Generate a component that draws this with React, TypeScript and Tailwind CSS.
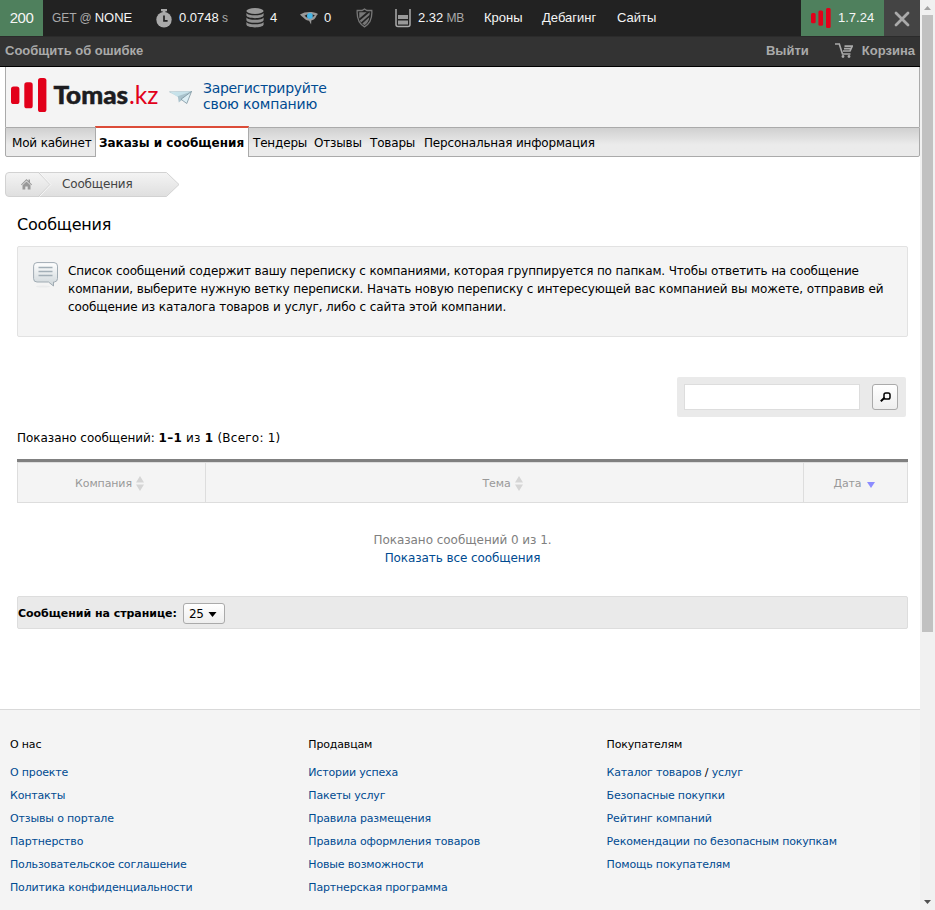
import type { ReactNode } from 'react';

const link = 'text-[#004b91]';

function LogoBars({ className }: { className: string }) {
  return (
    <svg className={className} viewBox="0 0 36 34" preserveAspectRatio="none" fill="#e2001a">
      <rect x="0" y="8.5" width="8.4" height="17.5" rx="2.6" />
      <rect x="13.3" y="4.3" width="8.4" height="26" rx="2.6" />
      <rect x="27" y="0" width="8.4" height="34" rx="2.6" />
    </svg>
  );
}

function Stopwatch() {
  return (
    <svg className="h-[19px] w-4" viewBox="0 0 16 19">
      <path d="M5 0h6v2.2H9.4V4H6.6V2.2H5z" fill="#aaa" />
      <circle cx="8" cy="10.800" r="7.700" fill="#aaa" />
      <path d="M8 6.500v5.300h3.600" fill="none" stroke="#222" strokeWidth="1.700" />
    </svg>
  );
}

function Database() {
  return (
    <svg className="h-5 w-[18px]" viewBox="0 0 18 20">
      <ellipse cx="9" cy="3" rx="8.6" ry="2.9" fill="#999" />
      <path
        d="M.4 4.9C2 8 16 8 17.600 4.900v2.600c-1 3.500-16.200 3.500-17.200 0zM.4 9.400c1.600 3.100 15.600 3.100 17.200 0v2.800c-1 3.500-16.200 3.500-17.200 0zM.4 14c1.600 3.100 15.600 3.100 17.200 0v2.800c-1 3.500-16.200 3.500-17.200 0z"
        fill="#909090"
      />
    </svg>
  );
}

function Eye() {
  return (
    <svg className="h-[13px] w-[18px]" viewBox="0 0 18 13">
      <path d="M0 2.600C5-.6 13-.6 18 2l-1.200 1.300C15.500 7 13 8.300 11.300 8.600l-.2 3.900-2-3.800C6 8.600 4 6.500 0 2.600z" fill="#999" />
      <path d="M4.500 3.700Q9 1 14.800 3.300 13 6 9.500 6.300 6.500 6 4.500 3.700z" fill="#222" />
      <circle cx="9.900" cy="3.900" r="2.900" fill="#47b5e6" />
    </svg>
  );
}

function Shield() {
  return (
    <svg className="h-5 w-[17px]" viewBox="0 0 17 20">
      <path
        d="M8.500 1 11 2.500h4.800c.5 7.500-1 13-7.300 16.300C2.200 15.500.7 10 1.200 2.500H6z"
        fill="none"
        stroke="#777"
        strokeWidth="1.300"
      />
      <path d="M3.200 4.300h7.500L3.300 10.500zM13.700 4.300 3.800 12.500l1.200 2 8.500-7.500zM13.300 9.300 6.300 15.500l2.200 1.700c2.800-1.700 4.200-4 4.800-7.900z" fill="#777" />
    </svg>
  );
}

function Memory() {
  return (
    <svg className="h-[19px] w-4" viewBox="0 0 16 19">
      <path d="M1 0v15.500q0 2 2 2h10q2 0 2-2V0" fill="none" stroke="#aaa" strokeWidth="1.500" />
      <path d="M3 6h10v4H3zM3 11.500h10v4H3z" fill="#999" />
    </svg>
  );
}

function Cart() {
  return (
    <svg className="h-[15px] w-[18px]" viewBox="0 0 18 15" fill="none" stroke="#aaa" strokeWidth="1.700">
      <path d="M0 1h4.300l3.200 10H15.500M9.500 3.200h7.700L15 8H8M9 5.600h7" />
      <circle cx="8" cy="13.500" r="1.400" fill="#aaa" stroke="none" />
      <circle cx="14" cy="13.500" r="1.400" fill="#aaa" stroke="none" />
    </svg>
  );
}

function PaperPlane() {
  return (
    <svg className="h-[13px] w-[23px]" viewBox="0 0 23 13">
      <path d="M.5.800 22.500.5 9 5z" fill="#f0fafc" stroke="#a3bcc6" strokeWidth=".7" />
      <path d="M1.500 1.300 22.500.5 9 6.200z" fill="#c7e2ea" />
      <path d="M8.800 5.300 22.500.5 12.800 9 9.800 11.500z" fill="#a9c2cc" />
      <path d="M12 8.300 22.500.5 17.800 12.500z" fill="#dceef4" stroke="#6e8793" strokeWidth=".7" />
    </svg>
  );
}

function MessageBubble() {
  return (
    <svg className="h-[27px] w-[26px]" viewBox="0 0 26 27">
      <defs>
        <linearGradient id="bubble" x2="0" y2="1">
          <stop stopColor="#fff" />
          <stop offset="1" stopColor="#cdd5d9" />
        </linearGradient>
      </defs>
      <ellipse cx="10" cy="24.500" rx="7" ry="1" fill="#eaebec" />
      <path
        d="M4 .6h17q3.500 0 3.500 3.500v12.400q0 3-3 3.500h-1v4l-5-4H4q-3.400 0-3.400-3.300V4.100Q.6.600 4 .6z"
        fill="url(#bubble)"
        stroke="#a0abb3"
      />
      <path d="M5.500 5.500h14M5.500 9.500h14M5.500 13.500h14" stroke="#a3afb7" strokeWidth="1.500" />
    </svg>
  );
}

function SortArrows() {
  return (
    <svg className="h-[15px] w-2" viewBox="0 0 8 15" fill="#d5d5d5">
      <path d="M0 6.500 4 0l4 6.500zM0 8.500h8L4 15z" />
    </svg>
  );
}

function Tool({ w, children }: { w: string; children: ReactNode }) {
  return <div className={`flex h-full shrink-0 items-center whitespace-pre ${w}`}>{children}</div>;
}

function Toolbar() {
  return (
    <div className="flex h-9 items-center bg-[#222] font-['Liberation_Sans',sans-serif] text-[13px] text-[#f5f5f5]">
      <div className="flex h-full w-[43px] items-center justify-center bg-[#4f805d] text-[15px] tracking-[-0.5px]">200</div>
      <Tool w="w-[113px] pl-[9px]">
        <span className="text-[12px] tracking-[-0.1px] text-[#aaa]">GET @ </span>NONE
      </Tool>
      <Tool w="w-[90px] gap-[7px]">
        <Stopwatch />
        <span>0.0748<span className="text-[12px] text-[#aaa]"> s</span></span>
      </Tool>
      <Tool w="w-[54px] gap-1.5"><Database /><span>4</span></Tool>
      <Tool w="w-14 gap-1.5"><Eye /><span>0</span></Tool>
      <Tool w="w-[39px]"><Shield /></Tool>
      <Tool w="w-[89px] gap-[7px]">
        <Memory />
        <span>2.32<span className="text-[12px] tracking-[-0.2px] text-[#aaa]"> MB</span></span>
      </Tool>
      <Tool w="w-[58px]">Кроны</Tool>
      <Tool w="w-[75px]">Дебагинг</Tool>
      <Tool w="w-[60px]">Сайты</Tool>
      <div className="ml-auto flex h-full w-[83px] items-center gap-[7px] bg-[#4f805d] pl-2.5">
        <LogoBars className="h-5 w-[20px]" />
        <span>1.7.24</span>
      </div>
      <div className="flex h-full w-9 items-center justify-center bg-[#444]">
        <svg className="mt-0.5 h-4 w-4" viewBox="0 0 16 16" stroke="#aaa" strokeWidth="2.800" strokeLinecap="round">
          <path d="M2 2 14 14M14 2 2 14" />
        </svg>
      </div>
    </div>
  );
}

const footer = [
  { title: 'О нас', items: ['О проекте', 'Контакты', 'Отзывы о портале', 'Партнерство', 'Пользовательское соглашение', 'Политика конфиденциальности'] },
  { title: 'Продавцам', items: ['Истории успеха', 'Пакеты услуг', 'Правила размещения', 'Правила оформления товаров', 'Новые возможности', 'Партнерская программа'] },
  { title: 'Покупателям', items: ['Каталог товаров / услуг', 'Безопасные покупки', 'Рейтинг компаний', 'Рекомендации по безопасным покупкам', 'Помощь покупателям'] },
];

export default function App() {
  return (
    <div className="flex h-[910px] w-[935px] overflow-hidden bg-white font-['DejaVu_Sans',sans-serif] text-[12px] leading-[18px] text-black">
      <div className="flex w-[920px] flex-col">
        <Toolbar />
        <div className="flex h-[31px] items-center border-t border-b border-t-[#2b2b2b] border-b-black bg-[#333] pb-0.5 pl-[5px] pr-[5px] font-['Liberation_Sans',sans-serif] text-[13px] font-bold text-[#aaa]">
          <span>Сообщить об ошибке</span>
          <span className="ml-auto mr-[26px]">Выйти</span>
          <Cart />
          <span className="ml-[9px]">Корзина</span>
        </div>

        <header className="ml-[5px] h-[60px] border-x border-[#aaa] bg-[#f4f4f4]">
          <div className="flex h-full items-start pl-[5px]">
            <LogoBars className="mt-[11px] h-[34px] w-[36px]" />
            <svg className="mt-2 ml-[5px] h-10 w-[108px]" viewBox="0 0 108 40">
              <text x="1.500" y="28.700" fontFamily="Lato" fontSize="25" fontWeight="900" fill="#1c1c20" stroke="#1c1c20" strokeWidth=".5" textLength="74.500" lengthAdjust="spacingAndGlyphs">Tomas</text>
              <text x="77" y="28.700" fontFamily="Lato" fontSize="25" fill="#e2001a" textLength="29.500" lengthAdjust="spacingAndGlyphs">.kz</text>
            </svg>
            <div className="mt-6 ml-[9px]"><PaperPlane /></div>
            <div className={`mt-[13px] ml-[11px] text-[14px] leading-4 ${link}`}>
              <span className="tracking-[-0.32px]">Зарегистрируйте</span><br />
              <span className="tracking-[-0.15px]">свою компанию</span>
            </div>
          </div>
        </header>
        <nav className="ml-[5px] flex h-[30px] items-center whitespace-nowrap rounded-b-[2px] border border-[#aaa] bg-linear-to-b from-[#d0d0d0] to-[#ebebeb] to-60% text-[12px] tracking-[-0.17px]">
          <span className="w-[89px] shrink-0 pt-0.5 pl-1.5">Мой кабинет</span>
          <span className="-mt-[2px] -mb-px flex h-[31px] w-[154px] shrink-0 items-center justify-center border-x border-t-2 border-x-[#aaa] border-t-[#dc4c38] bg-white pt-px pr-px font-bold tracking-normal">Заказы и сообщения</span>
          <span className="ml-1 w-[61px] pt-0.5">Тендеры</span>
          <span className="w-14 pt-0.5">Отзывы</span>
          <span className="w-[54px] pt-0.5">Товары</span>
          <span className="pt-0.5">Персональная информация</span>
        </nav>

        <div className="relative mt-[15px] ml-[5px] flex h-[25px] w-[175px] items-center text-[#444]">
          <svg className="absolute inset-0 h-[25px] w-[175px]" viewBox="0 0 175 25">
            <defs>
              <linearGradient id="crumb" x2="0" y2="1">
                <stop stopColor="#f4f4f4" />
                <stop offset="1" stopColor="#dfdfdf" />
              </linearGradient>
            </defs>
            <path d="M4 .5h157.500l12.500 12-12.500 12H4q-3.500 0-3.500-3.500V4Q.5.5 4 .5z" fill="url(#crumb)" stroke="#d2d2d2" />
            <path d="M33.500.5 45 12.500 33.500 24.500" fill="none" stroke="#cecece" />
            <path d="M34.500.5 46 12.500 34.500 24.500" fill="none" stroke="#f7f7f7" />
            <path d="M16 12.500 21.500 7l2 2V7.500H25v3l2 2-.7.700-4.800-4.600-4.800 4.600zM17.500 13.200l4-3.700 4 3.700V17.500h-2.800v-3h-2.400v3h-2.800z" fill="#999" />
          </svg>
          <span className="relative ml-[57px] -mt-0.5 tracking-[-0.17px]">Сообщения</span>
        </div>

        <main className="ml-[17px] flex w-[891px] flex-col">
          <h1 className="mt-[18px] h-5 text-[16px] leading-5 tracking-[-0.2px]">Сообщения</h1>
          <section className="mt-[11px] flex h-[91px] rounded-[2px] border border-[#e2e2e2] bg-[#f4f4f4] pt-[15px] pl-[15px]">
            <MessageBubble />
            <p className="ml-[9px] whitespace-nowrap">
              <span className="tracking-[-0.146px]">Список сообщений содержит вашу переписку с компаниями, которая группируется по папкам. Чтобы ответить на сообщение</span><br />
              <span className="tracking-[-0.122px]">компании, выберите нужную ветку переписки. Начать новую переписку с интересующей вас компанией вы можете, отправив ей</span><br />
              <span className="tracking-[-0.108px]">сообщение из каталога товаров и услуг, либо с сайта этой компании.</span>
            </p>
          </section>
          <div className="mt-10 mr-0.5 flex h-10 w-[229px] items-center gap-3 self-end rounded-[2px] bg-[#eaeaea] pl-[7px]">
            <input aria-label="Поиск" className="h-[26px] w-[176px] border border-[#ddd] bg-white outline-none" />
            <button aria-label="Найти" className="flex h-[26px] w-[26px] items-center justify-center rounded-[3px] border border-[#aaa] bg-linear-to-b from-white to-[#eee]">
              <svg className="h-[10px] w-[11px]" viewBox="0 0 11 10" fill="none" stroke="#000">
                <rect x="4" y="1" width="6" height="6" rx="1.800" strokeWidth="1.500" />
                <path d="M4.500 5.800.8 9.300" strokeWidth="2" />
              </svg>
            </button>
          </div>
          <p className="mt-3 h-[18px] tracking-[-0.04px]">Показано сообщений: <span className="tracking-[0.24px]"><b>1–1</b> из <b>1</b> (Всего: 1)</span></p>
          <div className="mt-[12px] flex h-11 border-t-[3px] border-[#808080] text-[11px] tracking-[-0.12px] text-[#999]">
            <div className="flex w-[189px] items-center justify-center gap-1 border border-[#ddd] bg-[#f4f4f4] pt-0.5 pr-1">Компания<SortArrows /></div>
            <div className="flex w-[597px] items-center justify-center gap-1 border-y border-[#ddd] bg-[#f4f4f4] pt-0.5 pr-1">Тема<SortArrows /></div>
            <div className="flex w-[105px] items-center justify-center gap-[5px] border border-[#ddd] bg-[#f4f4f4] pt-0.5 pr-[3px]">Дата
              <svg className="mt-[3px] h-1.5 w-2" viewBox="0 0 8 6"><path d="M0 0h8L4 6z" fill="#8c8cff" /></svg>
            </div>
          </div>
          <div className="mt-7 text-center tracking-[-0.04px] text-[#808080]">Показано сообщений 0 из 1.<br /><span className={`tracking-[-0.09px] ${link}`}>Показать все сообщения</span></div>
          <div className="mt-[29px] flex h-[33px] items-center rounded-[2px] border border-[#ddd] bg-[#eaeaea]">
            <b className="w-[165px] pt-[3px] text-[11px] tracking-[-0.04px]">Сообщений на странице:</b>
            <button className="mt-px flex h-[21px] w-[42px] items-center gap-[5px] rounded-[3px] border border-[#aaa] bg-linear-to-b from-white to-[#eee] pl-[5px] text-[12px] tracking-[-0.5px]">
              <span className="pt-px">25</span><svg className="mt-[3px] h-[5px] w-[9px]" viewBox="0 0 9 5"><path d="M.5 0h8L4.500 5z" /></svg>
            </button>
          </div>
        </main>

        <footer className="mt-20 flex flex-1 border-t border-[#d9d9d9] bg-[#f4f4f4] pt-[23px] pl-2.5 text-[11px] leading-[23px] tracking-[-0.16px]">
          {footer.map(({ title, items }) => (
            <div key={title} className="w-[298.300px] shrink-0 whitespace-nowrap">
              <div className="mb-[5px]">{title}</div>
              {items.map((item) => (
                <div key={item} className={link}>
                  {item.split(' / ').map((part, i) => (
                    <span key={part}>{i > 0 && <span className="text-black"> / </span>}{part}</span>
                  ))}
                </div>
              ))}
            </div>
          ))}
        </footer>
      </div>

      <aside className="flex w-[15px] flex-col items-center bg-[#f1f1f1]">
        <svg className="h-[15px] w-[7px]" viewBox="0 0 7 15"><path d="M0 10h7L3.500 6z" fill="#a3a3a3" /></svg>
        <div className="h-[617px] w-[11px] bg-[#c1c1c1]" />
        <svg className="mt-auto h-[15px] w-[7px]" viewBox="0 0 7 15"><path d="M0 5h7L3.500 9z" fill="#505050" /></svg>
      </aside>
    </div>
  );
}
